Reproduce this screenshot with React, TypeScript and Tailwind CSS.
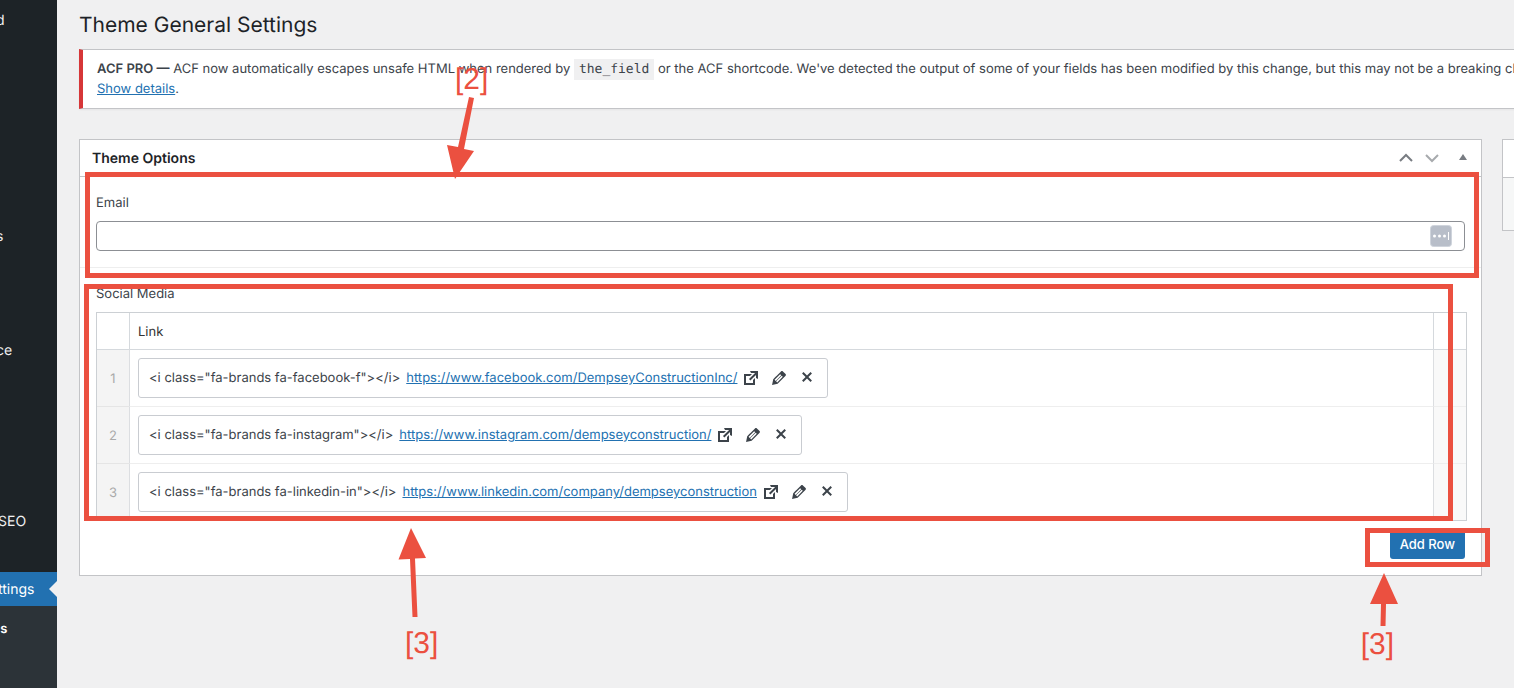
import type { ReactNode } from "react"

type SocialLink = {
  title: string
  url: string
}

const links: SocialLink[] = [
  {
    title: '<i class="fa-brands fa-facebook-f"></i>',
    url: "https://www.facebook.com/DempseyConstructionInc/",
  },
  {
    title: '<i class="fa-brands fa-instagram"></i>',
    url: "https://www.instagram.com/dempseyconstruction/",
  },
  {
    title: '<i class="fa-brands fa-linkedin-in"></i>',
    url: "https://www.linkedin.com/company/dempseyconstruction",
  },
]

const icons = {
  external:
    "M9 3h8v8l-2-1V6.92l-5.6 5.59-1.41-1.41L14.08 5H10zm3 12v-3l2-2v7H3V6h8L9 8H5v7h7z",
  edit: "M13.89 3.39l2.71 2.72c.46.46.42 1.24.03 1.64l-8.01 8.02-5.56 1.16 1.16-5.58s7.6-7.63 7.99-8.03c.39-.39 1.22-.39 1.68.07zm-2.73 2.79l-5.59 5.61 1.11 1.11 5.54-5.65zm-2.97 8.23l5.58-5.6-1.07-1.08-5.59 5.6z",
  remove:
    "M14.95 5.46L11.41 9l3.54 3.54-1.41 1.41L10 10.42l-3.53 3.53-1.42-1.42L8.58 9 5.05 5.47l1.42-1.42L10 7.58l3.54-3.53z",
}

function Dashicon({ name }: { name: keyof typeof icons }) {
  return (
    <svg viewBox="0 0 20 20" className="h-5 w-5 fill-current" aria-hidden="true">
      <path d={icons[name]} />
    </svg>
  )
}

function MenuItem({ children, className = "" }: { children: ReactNode; className?: string }) {
  return (
    <li className={className}>
      <a href="#" className="flex h-[34px] items-center pt-0.5">
        {children}
      </a>
    </li>
  )
}

function Sidebar() {
  return (
    <nav className="flex w-[57px] shrink-0 flex-col overflow-hidden bg-[#1d2327] text-sm text-[#f0f0f1]">
      <ul className="pt-[3px]">
        <MenuItem className="mb-[182px] -ml-1">d</MenuItem>
        <MenuItem className="mb-20 -ml-1">s</MenuItem>
        <MenuItem className="mb-[137px] -ml-1">ce</MenuItem>
        <MenuItem className="mb-[34px] -ml-0.5">SEO</MenuItem>
        <li className="relative bg-[#2271b1] text-white">
          <a href="#" className="-ml-0.5 flex h-[34px] items-center pt-0.5">
            ttings
          </a>
          <span className="absolute top-[9px] right-0 border-y-8 border-r-8 border-y-transparent border-r-[#f0f0f1]" />
        </li>
      </ul>
      <ul className="flex-1 bg-[#2c3338] pt-[5px] text-[13px] font-semibold text-white">
        <MenuItem className="-ml-2">gs</MenuItem>
      </ul>
    </nav>
  )
}

function Notice() {
  return (
    <div className="-mr-20 border border-l-4 border-[#c3c4c7] border-l-[#d63638] bg-white px-[14px] py-[9px] leading-5 whitespace-nowrap shadow-xs">
      <p>
        <strong className="font-semibold">ACF PRO —</strong> ACF now automatically escapes unsafe HTML when rendered by{" "}
        <code className="bg-[#f0f0f1] px-[5px] py-[3px] font-['DejaVu_Sans_Mono',monospace] text-[13px] leading-4">the_field</code>{" "}
        or the ACF shortcode. We've detected the output of some of your fields has been modified by this change, but this may not be a breaking change.
        <br />
        <a href="#" className="text-[#2271b1] underline">
          Show details
        </a>
        .
      </p>
    </div>
  )
}

function BoxHeader() {
  return (
    <div className="flex h-[37px] items-center border-b border-[#c3c4c7] pr-[14px] pl-3">
      <h2 className="flex-1 pt-0.5 text-sm font-semibold text-[#1d2327]">Theme Options</h2>
      <button type="button" aria-label="Move up" className="mr-3 text-[#787c82]">
        <svg viewBox="0 0 14 10" className="h-[10px] w-[14px] fill-none stroke-current stroke-2">
          <path d="M1 8l6-6 6 6" />
        </svg>
      </button>
      <button type="button" aria-label="Move down" className="mr-5 text-[#a7aaad]">
        <svg viewBox="0 0 14 10" className="h-[10px] w-[14px] fill-none stroke-current stroke-2">
          <path d="M1 2l6 6 6-6" />
        </svg>
      </button>
      <button type="button" aria-label="Toggle panel" className="text-[#787c82]">
        <svg viewBox="0 0 8 8" className="h-2 w-2 fill-current">
          <path d="M4 0l4 6H0z" />
        </svg>
      </button>
    </div>
  )
}

function EmailField() {
  return (
    <div className="relative border-b border-[#eee] px-4 py-4">
      <label htmlFor="email" className="mb-2 block leading-5">
        Email
      </label>
      <div className="relative">
        <input
          id="email"
          type="email"
          className="block h-[30px] w-full rounded border border-[#8c8f94] bg-white px-2"
        />
        {/* Password manager badge */}
        <svg viewBox="0 0 22 22" className="absolute top-1 right-[13px] h-[22px] w-[22px]" aria-hidden="true">
          <rect x="0.5" y="0.5" width="21" height="21" rx="3" fill="#b8bec9" stroke="#cfd4dc" />
          <circle cx="4.5" cy="11" r="1.5" fill="#fff" />
          <circle cx="9.5" cy="11" r="1.5" fill="#fff" />
          <circle cx="14.5" cy="11" r="1.5" fill="#fff" />
          <path d="M18.5 7v8" stroke="#fff" />
        </svg>
      </div>

      <div className="pointer-events-none absolute -top-[5px] right-[2px] -bottom-[11px] left-[5px] z-10 border-5 border-[#eb5040]" />
      <span className="absolute -top-[115px] left-[375px] z-10 font-['Liberation_Sans',sans-serif] text-3xl text-[#eb5040]">
        [2]
      </span>
      <svg viewBox="0 0 28 82" className="absolute -top-20 left-[367px] z-10 h-[82px] w-7 fill-[#eb5040]" aria-hidden="true">
        <path d="M22 0l5 1-10 51 10 2-19 28L0 48l11 2z" />
      </svg>
    </div>
  )
}

function LinkRow({ link, index }: { link: SocialLink; index: number }) {
  return (
    <tr>
      <td className="border-t border-[#e5e5e5] bg-[#f4f4f4] pt-1 text-center text-[#aaa]">{index + 1}</td>
      <td className="border-t border-l border-t-[#eee] border-l-[#dcdee1] p-2">
        <div className="flex h-10 w-fit items-center rounded-[3px] border border-[#c9ccd1] px-[10px]">
          <span className="mr-1.5 pt-0.5">{link.title}</span>
          <a href={link.url} className="mr-1 pt-0.5 text-[#2271b1] underline">
            {link.url}
          </a>
          <div className="flex gap-2">
            <a href={link.url} aria-label="Open link">
              <Dashicon name="external" />
            </a>
            <button type="button" aria-label="Edit link">
              <Dashicon name="edit" />
            </button>
            <button type="button" aria-label="Remove link">
              <Dashicon name="remove" />
            </button>
          </div>
        </div>
      </td>
      <td className="border-t border-l border-t-[#eee] border-l-[#dcdee1] bg-[#f9f9f9]" />
    </tr>
  )
}

function SocialField() {
  return (
    <div className="relative px-4 py-4">
      <p className="mb-2 leading-5">Social Media</p>
      <div className="-mr-0.5">
        <table className="w-full border-separate border-spacing-0 border border-[#ccd0d4]">
          <thead>
            <tr className="h-9">
              <th className="w-8" />
              <th className="border-l border-[#d5d9dd] px-2 pt-1 text-left font-normal text-[#333]">Link</th>
              <th className="w-[33px] border-l border-[#d5d9dd]" />
            </tr>
          </thead>
          <tbody className="[&>tr:first-child>td]:border-t-[#d5d9dd]">
            {links.map((link, i) => (
              <LinkRow key={link.url} link={link} index={i} />
            ))}
          </tbody>
        </table>
      </div>
      <div className="mt-2 flex justify-end">
        <div className="relative">
          <button type="button" className="h-[30px] rounded-[3px] bg-[#2271b1] px-[10px] pt-0.5 font-medium text-white">
            Add Row
          </button>
          <div className="pointer-events-none absolute -top-px -right-[25px] -bottom-2 -left-[25px] z-10 border-5 border-[#eb5040]" />
          <svg viewBox="0 0 28 53" className="absolute top-11 -left-5 z-10 h-[53px] w-7 fill-[#eb5040]" aria-hidden="true">
            <path d="M14 0l14 31H16l-.5 22h-5l.5-22H0z" />
          </svg>
          <span className="absolute top-[98px] -left-[29px] z-10 font-['Liberation_Sans',sans-serif] text-3xl text-[#eb5040]">
            [3]
          </span>
        </div>
      </div>

      <div className="pointer-events-none absolute top-4 right-7 bottom-[54px] left-1 z-10 border-5 border-[#eb5040]" />
      <svg viewBox="0 0 28 89" className="absolute top-[260px] left-[318px] z-10 h-[89px] w-7 fill-[#eb5040]" aria-hidden="true">
        <path d="M13 0l15 30-11 .5L19.500 89h-5L12 31 .5 31.500z" />
      </svg>
      <span className="absolute top-[358px] left-[325px] z-10 font-['Liberation_Sans',sans-serif] text-3xl text-[#eb5040]">
        [3]
      </span>
    </div>
  )
}

export default function App() {
  return (
    <div className="flex min-h-screen overflow-hidden bg-[#f0f0f1] font-[Inter,sans-serif] text-[13px] text-[#3c434a] [text-rendering:geometricPrecision]">
      <Sidebar />
      <main className="min-w-0 flex-1 overflow-hidden pt-[10px] pl-[22px]">
        <h1 className="mb-[7px] text-[21px] leading-8 text-[#1d2327]">Theme General Settings</h1>
        <Notice />
        <div className="mt-[30px] flex items-start gap-5">
          <section className="min-w-0 flex-1 border border-[#c3c4c7] bg-white">
            <BoxHeader />
            <EmailField />
            <SocialField />
          </section>
          <aside className="w-3 shrink-0 border border-r-0 border-[#c3c4c7] bg-white">
            <div className="h-[38px] border-b border-[#c3c4c7]" />
            <div className="h-[52px] bg-[#f6f7f7]" />
          </aside>
        </div>
      </main>
    </div>
  )
}
